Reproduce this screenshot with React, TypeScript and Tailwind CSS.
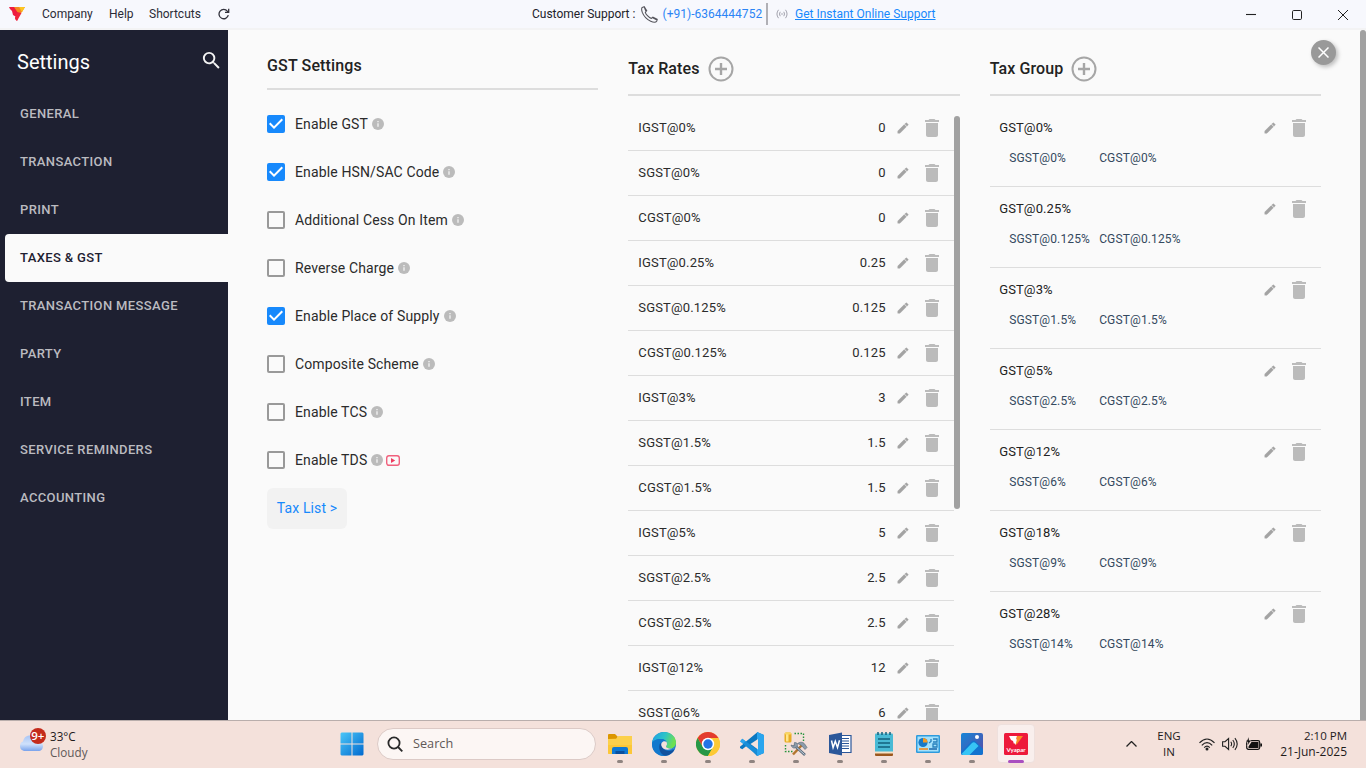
import type { ReactNode } from 'react';

const sidebarItems = [
  'GENERAL',
  'TRANSACTION',
  'PRINT',
  'TAXES & GST',
  'TRANSACTION MESSAGE',
  'PARTY',
  'ITEM',
  'SERVICE REMINDERS',
  'ACCOUNTING',
];

const gstOptions = [
  { label: 'Enable GST', on: true },
  { label: 'Enable HSN/SAC Code', on: true },
  { label: 'Additional Cess On Item', on: false },
  { label: 'Reverse Charge', on: false },
  { label: 'Enable Place of Supply', on: true },
  { label: 'Composite Scheme', on: false },
  { label: 'Enable TCS', on: false },
  { label: 'Enable TDS', on: false, video: true },
];

const taxRates: [string, string][] = [
  ['IGST@0%', '0'],
  ['SGST@0%', '0'],
  ['CGST@0%', '0'],
  ['IGST@0.25%', '0.25'],
  ['SGST@0.125%', '0.125'],
  ['CGST@0.125%', '0.125'],
  ['IGST@3%', '3'],
  ['SGST@1.5%', '1.5'],
  ['CGST@1.5%', '1.5'],
  ['IGST@5%', '5'],
  ['SGST@2.5%', '2.5'],
  ['CGST@2.5%', '2.5'],
  ['IGST@12%', '12'],
  ['SGST@6%', '6'],
];

const taxGroups: [string, string, string][] = [
  ['GST@0%', 'SGST@0%', 'CGST@0%'],
  ['GST@0.25%', 'SGST@0.125%', 'CGST@0.125%'],
  ['GST@3%', 'SGST@1.5%', 'CGST@1.5%'],
  ['GST@5%', 'SGST@2.5%', 'CGST@2.5%'],
  ['GST@12%', 'SGST@6%', 'CGST@6%'],
  ['GST@18%', 'SGST@9%', 'CGST@9%'],
  ['GST@28%', 'SGST@14%', 'CGST@14%'],
];

function PencilIcon() {
  return (
    <svg className="size-[14px] shrink-0" viewBox="0 0 24 24" fill="#a3a3a3" stroke="#a3a3a3" strokeWidth=".6">
      <path d="M3 17.25V21h3.75L17.81 9.94l-3.75-3.75L3 17.25zM20.71 7.04a1 1 0 0 0 0-1.41l-2.34-2.34a1 1 0 0 0-1.41 0l-1.83 1.83 3.75 3.75 1.83-1.83z" />
    </svg>
  );
}

function TrashIcon() {
  return (
    <svg className="size-6 shrink-0" viewBox="0 0 24 24" fill="#bbbbbb">
      <path d="M6 19c0 1.1.9 2 2 2h8c1.1 0 2-.9 2-2V7H6v12zM19 4h-3.5l-1-1h-5l-1 1H5v2h14V4z" />
    </svg>
  );
}

function InfoIcon() {
  return (
    <svg className="size-3 shrink-0" viewBox="0 0 12 12">
      <circle cx="6" cy="6" r="6" fill="#bbbbbb" />
      <path d="M5.3 3h1.4v1.300H5.3zM5.3 5.300h1.400v3.500H5.300z" fill="#f0f0f0" />
    </svg>
  );
}

function PlusCircle() {
  return (
    <svg className="size-[26px] shrink-0" viewBox="0 0 26 26" fill="none" stroke="#a6a6a6">
      <circle cx="13" cy="13" r="11.5" strokeWidth="2" />
      <path d="M13 7v12M7 13h12" strokeWidth="2.4" />
    </svg>
  );
}

function Checkbox({ on }: { on: boolean }) {
  return on ? (
    <svg className="size-[18px] shrink-0" viewBox="3 3 18 18">
      <rect x="3" y="3" width="18" height="18" rx="2" fill="#1789fc" />
      <path d="M10 17l-5-5 1.41-1.41L10 14.17l7.59-7.59L19 8l-9 9z" fill="#fff" />
    </svg>
  ) : (
    <span className="size-[18px] shrink-0 rounded-[2px] border-2 border-[#999]" />
  );
}

function TitleBar() {
  return (
    <header className="flex h-[30px] shrink-0 items-center border-b-2 border-[#f3f3f4] bg-[#f7f8fd] text-[12px] text-[#2b2b36]">
      <svg className="ml-[9px] h-[14px] w-4" viewBox="0 0 16 14">
        <path d="M0 0h7l3 6-2 8-2-3 .5-1.500L4 8 3 4 1 2z" fill="#ee1c3f" />
        <path d="M5 0h11l-3 5-4 4 0-3z" fill="#f58a1f" />
        <path d="M10 0h6l-3 5z" fill="#fdc520" />
        <path d="M8 5l4.500 1L8 14l-2-2z" fill="#f0243c" />
      </svg>
      <span className="ml-[17px] w-[67px]">Company</span>
      <span className="w-[40px]">Help</span>
      <span className="w-[69px]">Shortcuts</span>
      <svg className="size-3" viewBox="0 0 12 12" fill="none" stroke="#33333d" strokeWidth="1.3">
        <path d="M10.3 7.2A4.7 4.7 0 1 1 9.4 3.1L10.6 4.3M10.7.8v3.6H7" />
      </svg>
      <span className="ml-[302px] w-[109px] text-[#22222a]">Customer Support :</span>
      <svg className="size-[17px]" viewBox="0 0 17 17" fill="none" stroke="#55555c" strokeWidth="1.1">
        <path d="M1.2 1.4l2-.7 2.5 4-1.4 1.6c.7 2.3 3.7 5.4 6 6.1l1.6-1.3 4.3 2.3-.4 1.6c-1 1.6-3.600 1.4-6.100.2C6 13.600 2.800 10.200 1.300 6.400.6 4.400.300 2.400 1.200 1.400zM3.200.700L5.100 5.900M11.300 11.400l4.700 2.700" />
      </svg>
      <span className="ml-[4.500px] w-[103.500px] tracking-[0.02px] text-[#2a84f5]">(+91)-6364444752</span>
      <span className="h-[22px] w-[2px] bg-[#b0b0b6]" />
      <svg className="ml-2 h-[10px] w-3" viewBox="0 0 12 10" fill="none" stroke="#a2a2ad" strokeWidth="1">
        <path d="M2.500.8Q-.6 5 2.500 9.200M9.500.8Q12.600 5 9.500 9.200M4.200 2.800Q2.800 5 4.200 7.200M7.800 2.800Q9.200 5 7.800 7.200" />
        <circle cx="6" cy="5" r=".8" fill="#a2a2ad" stroke="none" />
      </svg>
      <span className="ml-[7px] text-[#1789fc] underline">Get Instant Online Support</span>
      <div className="ml-auto flex items-center gap-9 pr-[18px] pt-[2px]">
        <svg className="size-[10px]" viewBox="0 0 10 10" stroke="#222" strokeWidth="1.100">
          <path d="M0 4.500h10" />
        </svg>
        <svg className="size-[10px]" viewBox="0 0 10 10" fill="none" stroke="#222">
          <rect x=".5" y=".5" width="9" height="9" rx="1.200" />
        </svg>
        <svg className="size-[10px]" viewBox="0 0 10 10" stroke="#222">
          <path d="M0 0l10 10M10 0L0 10" />
        </svg>
      </div>
    </header>
  );
}

function Sidebar() {
  return (
    <aside className="w-[228px] shrink-0 bg-[#1e2031]">
      <div className="flex h-[60px] items-center justify-between pl-[17px] pr-[5px] pt-1">
        <h1 className="text-[20px] text-white">Settings</h1>
        <svg className="-mt-[3px] size-[23px]" viewBox="0 0 24 24" fill="#f4f4f4">
          <path d="M15.500 14h-.79l-.28-.27A6.471 6.471 0 0 0 16 9.500 6.500 6.500 0 1 0 9.500 16c1.610 0 3.090-.59 4.230-1.570l.27.28v.79l5 4.990L20.490 19l-4.990-5zm-6 0C7.010 14 5 11.990 5 9.500S7.010 5 9.500 5 14 7.010 14 9.500 11.990 14 9.500 14z" />
        </svg>
      </div>
      <nav className="text-[13px] font-medium tracking-[0.37px]">
        {sidebarItems.map((item) =>
          item === 'TAXES & GST' ? (
            <div key={item} className="ml-[5px] flex h-12 items-center rounded-l-[4px] bg-[#fafafa] pl-[15px] text-[#1e2031]">
              {item}
            </div>
          ) : (
            <div key={item} className="flex h-12 items-center pl-5 text-[#bbbbc0]">
              {item}
            </div>
          ),
        )}
      </nav>
    </aside>
  );
}

function GstSettings() {
  return (
    <section className="min-w-0 flex-1">
      <h2 className="h-[60px] border-b-2 border-[#dddddd] pt-6 text-[16px] leading-6 font-medium tracking-[0.15px] text-[#222]">GST Settings</h2>
      <div className="mt-[10px] text-[14px] tracking-[0.13px] text-[#2b2b2b]">
        {gstOptions.map((o) => (
          <div key={o.label} className="flex h-12 items-center">
            <Checkbox on={o.on} />
            <span className="mr-1 ml-[10px]">{o.label}</span>
            <InfoIcon />
            {o.video && (
              <svg className="ml-[3px] h-[11px] w-[14px]" viewBox="0 0 14 11">
                <rect x=".7" y=".7" width="12.600" height="9.600" rx="2.200" fill="none" stroke="#f0607c" strokeWidth="1.400" />
                <path d="M5 3l4.200 2.500L5 8z" fill="#ee3d60" />
              </svg>
            )}
          </div>
        ))}
      </div>
      <button className="mt-1 flex h-[41px] w-20 items-center justify-center rounded-[6px] bg-[#f2f2f2] text-[14px] tracking-[0.13px] text-[#1789fc]">Tax List &gt;</button>
    </section>
  );
}

function ColumnTitle({ children }: { children: ReactNode }) {
  return (
    <div className="flex h-[66px] shrink-0 items-center gap-2 border-b-2 border-[#dddddd] pt-[14px] text-[16px] font-medium tracking-[0.12px] text-[#222]">
      <h2>{children}</h2>
      <PlusCircle />
    </div>
  );
}

function TaxRates() {
  return (
    <section className="flex min-w-0 flex-1 flex-col">
      <ColumnTitle>Tax Rates</ColumnTitle>
      <div className="mt-[10px] flex min-h-0 flex-1 overflow-hidden">
        <div className="min-w-0 flex-1 text-[13px] tracking-[0.15px] text-[#2b2b2b]">
          {taxRates.map(([name, value]) => (
            <div key={name} className="flex h-[45px] items-center border-b border-[#dddddd] pr-[10px] pl-[10px]">
              <span className="flex-1">{name}</span>
              <span className="mr-[10px]">{value}</span>
              <PencilIcon />
              <span className="ml-[10px] flex">
                <TrashIcon />
              </span>
            </div>
          ))}
        </div>
        <div className="mt-[10px] h-[393px] w-[6px] rounded-[3px] bg-[#a1a1a1]" />
      </div>
    </section>
  );
}

function TaxGroups() {
  return (
    <section className="min-w-0 flex-1">
      <ColumnTitle>Tax Group</ColumnTitle>
      <div className="mt-[10px]">
        {taxGroups.map(([name, a, b]) => (
          <div key={name} className="h-[81px] border-b border-[#dddddd] pr-[10px] pl-[9.500px] pt-[10px] last:border-transparent">
            <div className="flex h-6 items-center text-[13px] tracking-[0.12px] text-[#222]">
              <span className="flex-1">{name}</span>
              <PencilIcon />
              <span className="ml-[10px] flex">
                <TrashIcon />
              </span>
            </div>
            <div className="flex h-9 items-center pl-[10px] text-[12px] tracking-[0.14px] text-[#34495e]">
              <span className="w-[90px]">{a}</span>
              <span>{b}</span>
            </div>
          </div>
        ))}
      </div>
    </section>
  );
}

function TaskSlot({ children, active }: { children: ReactNode; active?: boolean }) {
  return (
    <div className="flex h-12 w-11 shrink-0 justify-center">
      <div className={active ? 'mt-[4px] flex h-[39px] w-[38px] flex-col items-center rounded-[4px] border border-[#eee0dd] bg-[#f9efed] pt-[7px]' : 'mt-[4px] flex h-[39px] w-[38px] flex-col items-center pt-[8px]'}>
        <svg className="size-6 shrink-0" viewBox="0 0 24 24">
          {children}
        </svg>
        <span className={active ? 'mt-[4px] h-[3px] w-4 shrink-0 rounded-full bg-[#a94fc0]' : 'mt-[4px] h-[3px] w-[6px] shrink-0 rounded-full bg-[#8f8481]'} />
      </div>
    </div>
  );
}

function Taskbar() {
  return (
    <footer className="flex h-12 shrink-0 items-center border-t border-[#b9aeac] bg-[#f4e1db] pb-px font-['Open_Sans','Noto_Sans',sans-serif] text-[12px] text-[#1f1b1b]">
      <div className="flex w-[330px] items-center pl-[18px]">
        <svg className="-mt-[9px] h-[26px] w-[29px]" viewBox="0 0 29 26">
          <defs>
            <linearGradient id="cloud" x1="0" y1="0" x2="0" y2="1">
              <stop offset="0" stopColor="#a9c5f5" />
              <stop offset=".55" stopColor="#cfe1fb" />
              <stop offset="1" stopColor="#78a2ec" />
            </linearGradient>
          </defs>
          <path d="M6 24a5 5 0 0 1-1-9.500C6 10 9 8.500 12 8.500s6 2 6.500 5.500c3-.6 6.500 1 6.500 5 0 3-2 5-4.500 5z" fill="url(#cloud)" />
          <circle cx="20" cy="9" r="8" fill="#c42b1c" />
          <text x="19.800" y="12.800" textAnchor="middle" fill="#fff" fontSize="11.500" fontWeight="600" fontFamily="Open Sans">
            9+
          </text>
        </svg>
        <div className="ml-[3px] text-[11.700px] leading-4">
          <div>33°C</div>
          <div className="text-[#5f5857]">Cloudy</div>
        </div>
      </div>
      <div className="flex w-11 justify-center">
        <svg className="size-6" viewBox="0 0 24 24">
          <defs>
            <linearGradient id="win" x1="0" y1="0" x2="1" y2="1">
              <stop offset="0" stopColor="#4cc7f8" />
              <stop offset="1" stopColor="#0069cf" />
            </linearGradient>
          </defs>
          <path d="M1.500.5H11.500V11.500H.5V1.500Zm11 0H22.500l1 1V11.500h-11zM.5 12.500h11v11H1.500l-1-1zm12 0h11v10l-1 1h-10z" fill="url(#win)" />
        </svg>
      </div>
      <div className="ml-[3px] flex h-8 w-[219px] items-center rounded-full border border-[#dccac6] bg-[#fcf6f4] pl-[9px] text-[12.700px] text-[#5f5857]">
        <svg className="mr-[10px] size-4" viewBox="0 0 16 16" fill="none" stroke="#292929" strokeWidth="1.800">
          <circle cx="7" cy="7" r="5.600" />
          <path d="M11 11l4.300 4.300" />
        </svg>
        Search
      </div>
      <div className="ml-[2px] flex">
        <TaskSlot>
          <path d="M0 3a1 1 0 0 1 1-1h6l2.500 2.500V8H0z" fill="#dc9600" />
          <path d="M0 7l8-.2L10.500 4H24v18H1a1 1 0 0 1-1-1z" fill="#fcd04b" />
          <path d="M0 13h24v9H0z" fill="#fbbd25" opacity=".5" />
          <path d="M4 22v-5a2 2 0 0 1 2-2h12a2 2 0 0 1 2 2v5z" fill="#0e78d4" />
          <path d="M7.500 19h9v3h-9z" fill="#0a4f9e" />
        </TaskSlot>
        <TaskSlot>
          <defs>
            <linearGradient id="edge" x1="0" y1="0" x2="1" y2=".3">
              <stop offset="0" stopColor="#1e9de6" />
              <stop offset=".55" stopColor="#2cc3c8" />
              <stop offset="1" stopColor="#6ee052" />
            </linearGradient>
          </defs>
          <circle cx="12" cy="12" r="12" fill="#1478d0" />
          <path d="M0 11C1 4 6 0 12 0c7 0 12 5 12 10.500 0 4-3 6-6 6-2.500 0-4-1-4-2 0-.7 1-1 1-2.700C15 9 12.500 7 9 7 5 7 1.500 8.500 0 11z" fill="url(#edge)" />
          <path d="M9 9c-3 3-3 11 5 14.800C7 25 0 20 0 12c0-3 4-5 9-5 3 0 5 2 5.500 3.500C13 9 10.500 8.500 9 9z" fill="#1278cd" />
          <path d="M8.500 10.500C5.500 15 8 23.500 14 23.800c4-.7 7-3.300 8.500-6.300-6 3-12.500 1.500-14-7z" fill="#11509d" />
          <path d="M14.500 9.800c-3.500-1.800-6 1.200-5 4.200 1 3.500 6.500 5 12 2.200l2.500-.7c-4 2-9.500 1.300-10-1 0-.9 1-1 1-2.500 0-.8-.2-1.600-.5-2.200z" fill="#f4e1db" />
        </TaskSlot>
        <TaskSlot>
          <circle cx="12" cy="12" r="12" fill="#fcc934" />
          <path d="M1.600 6A12 12 0 0 1 22.400 6H12l-5.200 9z" fill="#e33b2e" />
          <path d="M1.600 6A12 12 0 0 0 12 24l5.200-9H6.800z" fill="#279847" />
          <path d="M12 6h10.400A12 12 0 0 1 12 24l5.200-9z" fill="#fcc934" />
          <circle cx="12" cy="12" r="6.200" fill="#fff" />
          <circle cx="12" cy="12" r="4.700" fill="#2474e5" />
        </TaskSlot>
        <TaskSlot>
          <path d="M17 0l7 3v18l-7 3L7 13.500 2.300 17.200 0 16v-1.500L17 .500z" fill="#0b78c1" />
          <path d="M0 9.500L2.300 6.800 18 18.500V24z" fill="#188dd8" />
          <path d="M0 9.500L2.300 6.800 5.500 9.300 3 12zM17 0l7 3v18l-7 3z" fill="#2aa5ee" />
          <path d="M18 7v10.500L10.500 12z" fill="#f4e1db" />
          <path d="M0 9.500L3 12 0 14.500z" fill="#f4e1db" />
        </TaskSlot>
        <TaskSlot>
          <path d="M10.500 1.500h9v9M1.500 13v6.500h8" fill="none" stroke="#25933b" strokeWidth="1.400" strokeDasharray="1.500 1.500" />
          <rect x=".5" y=".5" width="7" height="10" rx="1.500" fill="#e8ac24" />
          <path d="M2 1.500h2.500v8H2z" fill="#ffe58b" />
          <ellipse cx="4" cy="1.400" rx="3.300" ry="1.200" fill="#f9d662" />
          <path d="M17.500 13.500L9 22.500" stroke="#b3752e" strokeWidth="2.500" />
          <path d="M10 13l11 10" stroke="#596b7c" strokeWidth="2.600" />
          <path d="M10.500 13.500l10 9" stroke="#c6d2dc" strokeWidth="1" />
          <path d="M7 13l3 1 .5-3.500c3 0 3.500 2 2.500 4.500-3 2-5 1-6-2zM13.500 11.500c3-2 6-1.500 7.500 1l2 3-2 2-4-4.500z" fill="#8c9cab" stroke="#506170" strokeWidth=".6" />
        </TaskSlot>
        <TaskSlot>
          <path d="M12 3.500h11v17H12z" fill="#fff" stroke="#2b579a" strokeWidth="1.200" />
          <path d="M14 6.500h7M14 9h7M14 11.500h7M14 14h7M14 16.500h7" stroke="#2b579a" strokeWidth="1" />
          <path d="M1 3l13-2.500v23L1 21z" fill="#2b579a" />
          <path d="M3.500 8.500l1.600 7 2.200-6.200 2.200 6.200 2-7.300" fill="none" stroke="#fff" strokeWidth="1.500" />
        </TaskSlot>
        <TaskSlot>
          <path d="M3 19h18v4a1 1 0 0 1-1 1H4a1 1 0 0 1-1-1z" fill="#9c571d" />
          <path d="M3 19h18v2.500H3z" fill="#f7e2c7" />
          <path d="M3 2.500a1 1 0 0 1 1-1h16a1 1 0 0 1 1 1v17H3z" fill="#49bad5" />
          <path d="M6 0v3M10 0v3M14 0v3M18 0v3M6 7h12M6 11h12M6 15h12" stroke="#12617e" strokeWidth="1.500" />
        </TaskSlot>
        <TaskSlot>
          <rect y="3" width="24" height="18" rx="1.200" fill="#2e9bdd" />
          <rect x="1.500" y="4.500" width="21" height="15" fill="#a4e1fb" />
          <circle cx="7" cy="10.500" r="4.600" fill="#1779c8" />
          <path d="M7 10.500V5.900a4.600 4.600 0 0 1 4.600 4.600z" fill="#f39a22" />
          <path d="M13 11l2-1.500V7M17 7h4v3h-4M17 12h4v3h-4z" fill="none" stroke="#2680bd" strokeWidth="1.300" />
          <path d="M3 17h9" stroke="#f08a20" strokeWidth="1.600" />
          <path d="M13 17h8" stroke="#226fb0" strokeWidth="1.600" />
        </TaskSlot>
        <TaskSlot>
          <defs>
            <linearGradient id="photo" x1="0" y1="0" x2="1" y2="1">
              <stop offset="0" stopColor="#1585d8" />
              <stop offset="1" stopColor="#5a4ba6" />
            </linearGradient>
          </defs>
          <rect x="1" y="1" width="22" height="22" rx="2" fill="url(#photo)" />
          <path d="M1 20L11.500 9.500q2-1.500 4 0L23 17v4a2 2 0 0 1-2 2H3a2 2 0 0 1-2-2z" fill="#1273cf" />
          <path d="M1.500 22L12 11q1.700-1.700 3.500 0l3 3-9 9H3z" fill="#37c5f5" />
          <circle cx="17" cy="5" r="2" fill="#fff" />
        </TaskSlot>
        <TaskSlot active>
          <rect y="1" width="24" height="22" rx="1.500" fill="#ed1a3b" />
          <path d="M5 4h8l-1 6-2 2-1-3-2-1z" fill="#fff" />
          <path d="M13 4h6l-6 8-2 1z" fill="#fa8b23" />
          <path d="M10 9l3-2-1.500 6z" fill="#fff" />
          <text x="12" y="19.500" textAnchor="middle" fill="#fff" fontSize="6" fontWeight="700" fontFamily="Lato">
            Vyapar
          </text>
        </TaskSlot>
      </div>
      <div className="ml-auto flex items-center pr-[19px]">
        <svg className="mr-[20px] h-[6px] w-[11px]" viewBox="0 0 11 6" fill="none" stroke="#222" strokeWidth="1.300">
          <path d="M.5 5.500l5-5 5 5" />
        </svg>
        <div className="mr-[18px] w-6 text-center text-[11.500px] leading-4">
          <div>ENG</div>
          <div>IN</div>
        </div>
        <svg className="mr-[7px] h-[13px] w-4" viewBox="0 0 16 13" fill="none" stroke="#222" strokeWidth="1.200">
          <path d="M.5 4.800Q8-2.800 15.500 4.800M2.800 7.300Q8 2 13.200 7.300M5.200 9.600Q8 6.500 10.800 9.600" />
          <circle cx="8" cy="11" r="1.500" fill="#222" stroke="none" />
        </svg>
        <svg className="mr-[8px] h-[14px] w-4" viewBox="0 0 16 14" fill="none" stroke="#222" strokeWidth="1.100">
          <path d="M.6 4.700h2.400L6.600 1.500v11L3 9.300H.6zM8.800 4.700q1.600 2.300 0 4.600M10.800 3q3 4 0 8M12.900 1.200q4.600 5.800 0 11.600" />
        </svg>
        <svg className="mr-[16px] h-[14px] w-4" viewBox="0 0 16 14">
          <rect x=".7" y="3.700" width="13" height="8.600" rx="1.700" fill="none" stroke="#111" strokeWidth="1.200" />
          <path d="M5.500 5H12.500v6h-10V9.500zM14.300 6.500H16v3h-1.700z" fill="#111" />
          <path d="M3 0L0 5h2L1.200 9 5 3.500H3z" fill="#111" stroke="#f4e1db" strokeWidth=".4" />
        </svg>
        <div className="flex w-[69px] flex-col items-end leading-4 whitespace-nowrap">
          <div className="text-[11.500px]">2:10 PM</div>
          <div>21-Jun-2025</div>
        </div>
      </div>
    </footer>
  );
}

export default function App() {
  return (
    <div className="flex h-screen w-full flex-col overflow-hidden bg-[#fafafa] font-['Roboto',sans-serif]">
      <TitleBar />
      <div className="relative flex min-h-0 flex-1">
        <Sidebar />
        <main className="flex min-w-0 flex-1 gap-[30px] overflow-hidden px-[39px]">
          <GstSettings />
          <TaxRates />
          <TaxGroups />
        </main>
        <div className="w-[6px] shrink-0 rounded-t-[3px] bg-[#a1a1a1]" />
        <button className="absolute top-[10px] right-[30px] flex size-[25px] items-center justify-center rounded-full bg-[#999] shadow-[2px_2px_4px_rgba(0,0,0,0.25)]">
          <svg className="size-[11px]" viewBox="0 0 11 11" stroke="#fff" strokeWidth="1.500">
            <path d="M.5.5l10 10M10.500.5l-10 10" />
          </svg>
        </button>
      </div>
      <Taskbar />
    </div>
  );
}
